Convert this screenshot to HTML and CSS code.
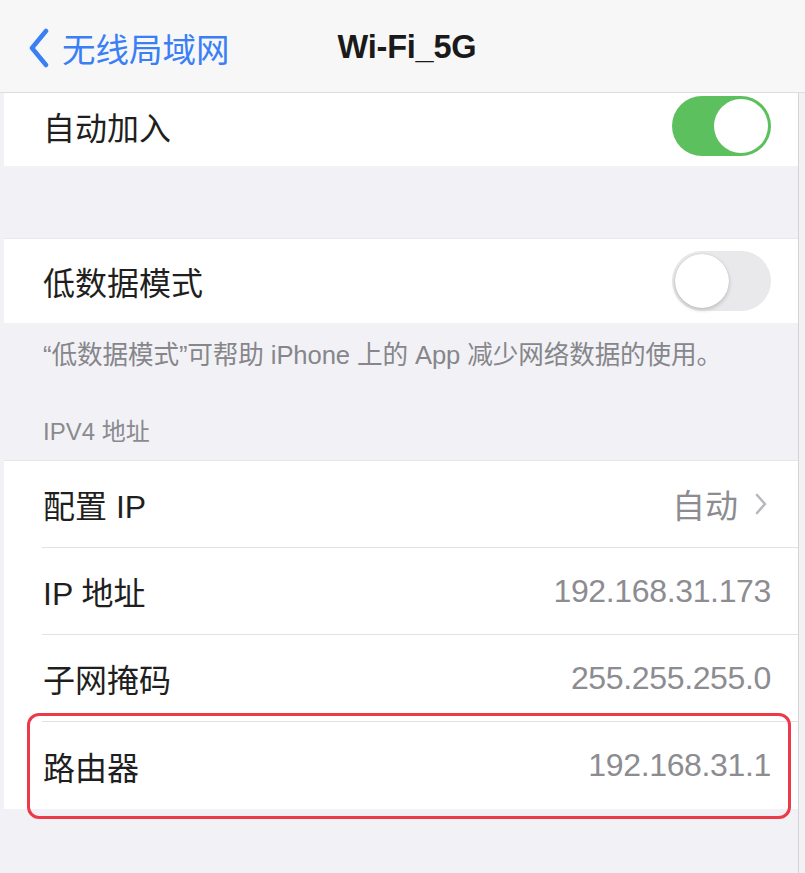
FILE: index.html
```html
<!DOCTYPE html>
<html lang="zh-CN">
<head>
<meta charset="utf-8">
<title>Wi-Fi_5G</title>
<link rel="stylesheet" href="styles.css">
</head>
<body>
<header class="nav">
  <div class="back">
    <svg class="back-chevron" width="22" height="40" viewBox="0 0 22 40"><path d="M18 3 L4 20 L18 37" fill="none" stroke="#3a7ff5" stroke-width="4.5" stroke-linecap="round" stroke-linejoin="round"/></svg>
    <span class="back-label">无线局域网</span>
  </div>
  <div class="title">Wi-Fi_5G</div>
</header>
<main class="page">
  <section class="group">
    <div class="cell cell-top">
      <div class="cell-inner">
        <span class="label">自动加入</span>
        <span class="toggle on"><span class="knob"></span></span>
      </div>
    </div>
  </section>
  <div class="spacer"></div>
  <section class="group">
    <div class="cell cell-mid">
      <div class="cell-inner">
        <span class="label">低数据模式</span>
        <span class="toggle off"><span class="knob"></span></span>
      </div>
    </div>
  </section>
  <p class="footnote">“低数据模式”可帮助 iPhone 上的 App 减少网络数据的使用。</p>
  <p class="section-head">IPV4 地址</p>
  <section class="group ipv4">
    <div class="cell">
      <div class="cell-inner sep">
        <span class="label">配置 IP</span>
        <span class="value"><span class="value-cjk">自动</span><svg class="chev" width="14" height="24" viewBox="0 0 14 24"><path d="M3 3 L11 12 L3 21" fill="none" stroke="#b8b8bd" stroke-width="2.6" stroke-linecap="round" stroke-linejoin="round"/></svg></span>
      </div>
    </div>
    <div class="cell">
      <div class="cell-inner sep">
        <span class="label">IP 地址</span>
        <span class="value">192.168.31.173</span>
      </div>
    </div>
    <div class="cell">
      <div class="cell-inner sep">
        <span class="label">子网掩码</span>
        <span class="value">255.255.255.0</span>
      </div>
    </div>
    <div class="cell">
      <div class="cell-inner">
        <span class="label">路由器</span>
        <span class="value">192.168.31.1</span>
      </div>
    </div>
    <div class="highlight"></div>
  </section>
</main>
</body>
</html>
```

FILE: styles.css
```css
html, body {
  margin: 0;
  padding: 0;
}
body {
  width: 805px;
  height: 873px;
  overflow: hidden;
  background: #f2f2f6;
  font-family: "Liberation Sans", "Noto Sans CJK SC", sans-serif;
  color: #1f1f21;
}
.nav {
  height: 92px;
  border-bottom: 1px solid #dedee2;
  background: #f7f7f8;
  display: flex;
  align-items: center;
  position: relative;
}
.back {
  display: flex;
  align-items: center;
  margin-left: 28px;
  margin-top: 4px;
}
.back-chevron {
  display: block;
}
.back-label {
  margin-left: 12px;
  font-size: 33.5px;
  color: #3a7ff5;
  font-family: "Noto Sans CJK SC", sans-serif;
  line-height: 40px;
}
.title {
  margin-left: 108px;
  margin-top: 2px;
  font-size: 32.5px;
  font-weight: 700;
  color: #1a1a1a;
  letter-spacing: -0.2px;
}
.page {
  margin-left: 4px;
  width: 794px;
  border-right: 1px solid #d4d4d8;
  height: 780px;
}
.group {
  background: #fff;
}
.cell {
  padding-left: 38px;
}
.cell-inner {
  display: flex;
  align-items: center;
  justify-content: space-between;
  padding-right: 27px;
  height: 87px;
  box-sizing: border-box;
}
.cell-inner.sep {
  border-bottom: 1px solid #e2e2e5;
}
.cell-top .cell-inner {
  height: 73px;
}
.cell-top .label {
  margin-top: -8px;
}
.cell-mid {
  border-top: 1px solid #e9e9ec;
}
.cell-mid .cell-inner {
  height: 84px;
}
.label {
  font-size: 32px;
  margin-left: 1px;
  font-family: "Liberation Sans", "Noto Sans CJK SC", sans-serif;
  color: #1f1f21;
}
.value {
  font-size: 32px;
  color: #8c8c91;
  display: flex;
  align-items: center;
  letter-spacing: -0.35px;
}
.value-cjk {
  font-size: 33px;
  letter-spacing: 0;
}
.chev {
  margin-left: 16px;
  margin-right: 3px;
}
.toggle {
  position: relative;
  width: 99px;
  height: 60px;
  border-radius: 30px;
  box-sizing: border-box;
}
.toggle.on {
  background: #5bc05d;
  margin-top: -8px;
}
.toggle.off {
  background: #e9e9eb;
}
.knob {
  position: absolute;
  top: 3px;
  width: 54px;
  height: 54px;
  border-radius: 50%;
  background: #fff;
}
.toggle.on .knob {
  right: 3px;
}
.toggle.off .knob {
  left: 3px;
  box-shadow: 0 2px 4px rgba(0,0,0,0.18), 0 0 1px rgba(0,0,0,0.2);
}
.spacer {
  height: 72px;
}
.footnote {
  margin: 0;
  padding: 18px 0 0 39px;
  line-height: 28px;
  font-size: 25.6px;
  color: #86868b;
  letter-spacing: -0.1px;
}
.section-head {
  margin: 0;
  padding: 49px 0 14px 39px;
  line-height: 28px;
  font-size: 24px;
  color: #8a8a8f;
}
.ipv4 {
  position: relative;
  border-top: 1px solid #e6e6e9;
}
.highlight {
  position: absolute;
  left: 23px;
  top: 252px;
  width: 764px;
  height: 106px;
  border: 3px solid #ec3a48;
  border-radius: 12px;
  box-sizing: border-box;
}
```
